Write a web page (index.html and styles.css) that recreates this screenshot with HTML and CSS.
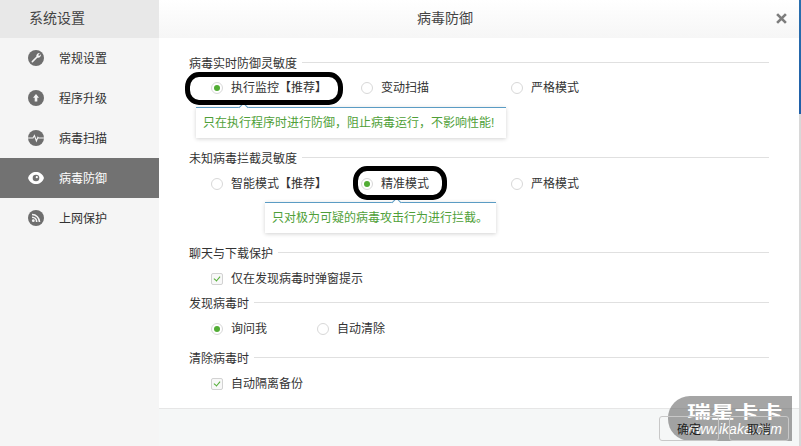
FILE: index.html
```html
<!DOCTYPE html>
<html lang="zh-CN">
<head>
    <meta charset="UTF-8">
    <title>病毒防御</title>
    <link rel="stylesheet" href="styles.css">
</head>
<body>
    <div class="window">
        <div class="sidebar">
            <div class="side-title">系统设置</div>
            <div class="side-item">
                <svg class="side-icon" viewBox="0 0 16 16"><circle cx="8" cy="8" r="8"/><path class="cut" d="M3.600 11.200 8.400 6.600a2.800 2.800 0 0 1 3.400-3.400L10.200 4.900l.9 1 1.700-1.600a2.800 2.800 0 0 1-3.500 3.400l-4.600 4.700a1 1 0 0 1-1.100-1.200z"/></svg>
                <span>常规设置</span>
            </div>
            <div class="side-item">
                <svg class="side-icon" viewBox="0 0 16 16"><circle cx="8" cy="8" r="8"/><path class="cut" d="M8 4 11 7.800H9.300V11.500H6.700V7.800H5z"/></svg>
                <span>程序升级</span>
            </div>
            <div class="side-item">
                <svg class="side-icon" viewBox="0 0 16 16"><circle cx="8" cy="8" r="8"/><path class="line" d="M0 8h5l1.400-2.500 2 5.500 1.500-3.800.7.800H16"/></svg>
                <span>病毒扫描</span>
            </div>
            <div class="side-item active">
                <svg class="side-icon" viewBox="0 0 16 16"><path class="eye" d="M0 8C1.500 3.800 4.500 2 8 2s6.500 1.800 8 6c-1.500 4.200-4.500 6-8 6S1.500 12.200 0 8z"/><circle class="pupil" cx="8" cy="8" r="3.300"/><circle class="eye" cx="8.800" cy="7.200" r="1.100"/></svg>
                <span>病毒防御</span>
            </div>
            <div class="side-item">
                <svg class="side-icon" viewBox="0 0 16 16"><circle cx="8" cy="8" r="8"/><circle class="cut" cx="5.300" cy="10.700" r="1.400"/><path class="rss" d="M4 7.300a4.700 4.700 0 0 1 4.700 4.700M4 4.500a7.500 7.500 0 0 1 7.500 7.500"/></svg>
                <span>上网保护</span>
            </div>
        </div>

        <div class="main">
            <div class="main-head">
                <span class="main-title">病毒防御</span>
                <svg class="close" viewBox="0 0 10 10"><path d="M1 1 9 9M9 1 1 9"/></svg>
            </div>

            <div class="content">
                <div class="sec-title sec-first"><span>病毒实时防御灵敏度</span></div>
                <div class="opt-row">
                    <span class="opt"><i class="radio on"></i>执行监控【推荐】</span>
                    <span class="opt"><i class="radio"></i>变动扫描</span>
                    <span class="opt"><i class="radio"></i>严格模式</span>
                </div>
                <div class="tip tip-one">只在执行程序时进行防御，阻止病毒运行，不影响性能!</div>

                <div class="sec-title sec-second"><span>未知病毒拦截灵敏度</span></div>
                <div class="opt-row">
                    <span class="opt"><i class="radio"></i>智能模式【推荐】</span>
                    <span class="opt"><i class="radio on"></i>精准模式</span>
                    <span class="opt"><i class="radio"></i>严格模式</span>
                </div>
                <div class="tip tip-two">只对极为可疑的病毒攻击行为进行拦截。</div>

                <div class="sec-title sec-third"><span>聊天与下载保护</span></div>
                <div class="opt-row">
                    <span class="opt"><i class="check"></i>仅在发现病毒时弹窗提示</span>
                </div>
                <div class="sec-title sec-fourth"><span>发现病毒时</span></div>
                <div class="opt-row">
                    <span class="opt opt-short"><i class="radio on"></i>询问我</span>
                    <span class="opt"><i class="radio"></i>自动清除</span>
                </div>
                <div class="sec-title sec-fifth"><span>清除病毒时</span></div>
                <div class="opt-row">
                    <span class="opt"><i class="check"></i>自动隔离备份</span>
                </div>
            </div>

            <div class="footer">
                <button class="btn">确定</button>
                <button class="btn">取消</button>
            </div>
        </div>
        <div class="edge"></div>

        <!-- 截图上的手绘标记 -->
        <div class="mark mark-one"></div>
        <div class="mark mark-two"></div>

        <!-- 水印 -->
        <div class="watermark">
            <div class="wm-name">瑞星卡卡</div>
            <div class="wm-url">www.ikaka.com</div>
        </div>
    </div>
</body>
</html>
```

FILE: styles.css
```css
html, body {
    margin: 0;
    padding: 0;
}
body {
    font-family: "Liberation Sans", "Noto Sans CJK SC", sans-serif;
    font-size: 12px;
    color: #333;
    background-color: white;
    overflow: hidden;
}
.window {
    position: relative;
    display: flex;
    width: 801px;
    height: 446px;
    overflow: hidden;
}

/* 左侧菜单 */
.sidebar {
    width: 159px;
    flex-shrink: 0;
    background-color: #f5f5f5;
}
.side-title {
    height: 38px;
    line-height: 36px;
    padding-left: 29px;
    font-size: 14px;
    color: #444;
    background-color: #e8e8e8;
}
.side-item {
    display: flex;
    align-items: center;
    height: 40px;
    padding-left: 28px;
    color: #333;
}
.side-item span {
    margin-left: 15px;
    margin-bottom: 2px;
}
.side-icon {
    width: 16px;
    height: 16px;
    fill: #6e6e6e;
}
.side-icon .cut {
    fill: #f5f5f5;
}
.side-icon .line {
    fill: none;
    stroke: #f5f5f5;
    stroke-width: 1.100;
}
.side-icon .rss {
    fill: none;
    stroke: #f5f5f5;
    stroke-width: 1.600;
}
.side-item.active {
    background-color: #727272;
    color: white;
}
.side-icon .eye {
    fill: white;
}
.side-icon .pupil {
    fill: #727272;
}

/* 右侧内容 */
.main {
    flex: 1;
    display: flex;
    flex-direction: column;
    background-color: white;
}
.main-head {
    position: relative;
    height: 38px;
    line-height: 36px;
    padding-right: 68px;
    text-align: center;
    font-size: 14px;
    color: #444;
    background: linear-gradient(#ffffff, #f6f6f6);
    box-sizing: border-box;
}
.close {
    position: absolute;
    top: 13px;
    right: 12px;
    width: 11px;
    height: 11px;
    fill: none;
    stroke: #7d7d7d;
    stroke-width: 2.400;
}
.content {
    flex: 1;
    padding: 0 30px;
}
.sec-title {
    display: flex;
    align-items: center;
    height: 16px;
    color: #333;
}
.sec-title::after {
    content: "";
    flex: 1;
    height: 1px;
    margin-left: 5px;
    background-color: #e0e0e0;
}
.sec-first { margin-top: 16px; }
.sec-second { margin-top: 11px; }
.sec-third { margin-top: 11px; }
.sec-fourth { margin-top: 6px; }
.sec-fifth { margin-top: 11px; }
.opt-row {
    display: flex;
    height: 18px;
    margin-top: 10px;
    padding-left: 22px;
    line-height: 18px;
    white-space: nowrap;
}
.sec-first + .opt-row {
    margin-top: 9px;
}
.opt {
    display: flex;
    align-items: center;
    width: 150px;
}
.opt-short {
    width: 106px;
}
.radio {
    position: relative;
    flex-shrink: 0;
    width: 10px;
    height: 10px;
    margin-right: 8px;
    border: 1px solid #d8d8d8;
    border-radius: 50%;
    background-color: white;
}
.radio.on::after {
    content: "";
    position: absolute;
    top: 2px;
    left: 2px;
    width: 6px;
    height: 6px;
    border-radius: 50%;
    background-color: #52ad35;
}
.check {
    position: relative;
    flex-shrink: 0;
    width: 10px;
    height: 10px;
    margin-right: 8px;
    border: 1px solid #d2d2d2;
    border-radius: 2px;
    background-color: #f8f8f8;
}
.check::after {
    content: "";
    position: absolute;
    top: 1px;
    left: 3px;
    width: 3px;
    height: 5px;
    border: solid #52ad35;
    border-width: 0 1.500px 1.500px 0;
    transform: rotate(40deg);
}

/* 提示框 */
.tip {
    position: relative;
    height: 30px;
    line-height: 30px;
    padding-left: 7px;
    color: #4f9f38;
    background-color: white;
    border-top: 1px solid #5b9cc4;
    box-shadow: 0 1px 4px rgba(0, 0, 0, 0.18);
}
.tip::before {
    content: "";
    position: absolute;
    top: -4px;
    width: 6px;
    height: 6px;
    background-color: white;
    border-left: 1px solid #5b9cc4;
    border-top: 1px solid #5b9cc4;
    transform: rotate(45deg);
}
.tip-one {
    width: 303px;
    margin-left: 7px;
    margin-top: 10px;
}
.tip-one::before { left: 44px; }
.tip-two {
    width: 224px;
    margin-left: 76px;
    margin-top: 9px;
}
.tip-two::before { left: 128px; }

/* 底部按钮 */
.footer {
    display: flex;
    justify-content: flex-end;
    gap: 10px;
    height: 38px;
    padding: 7px 10px 0 0;
    box-sizing: border-box;
    background-color: #f5f7f7;
    border-top: 1px solid #e6e6e6;
}
.btn {
    position: relative;
    z-index: 3;
    width: 60px;
    height: 25px;
    padding: 0;
    font-family: inherit;
    font-size: 12px;
    color: #222;
    background: transparent;
    border: 1px solid #c8c8c8;
    border-radius: 3px;
}
.edge {
    width: 2px;
    flex-shrink: 0;
    background: linear-gradient(#2a6fae, #1f5fa8 114px, #d8d8d8 114px);
}

/* 标记和水印 */
.mark {
    position: absolute;
    border: 5px solid black;
    border-radius: 14px / 15px;
    box-sizing: border-box;
}
.mark-one {
    left: 185px;
    top: 72px;
    width: 158px;
    height: 33px;
}
.mark-two {
    left: 353px;
    top: 166px;
    width: 94px;
    height: 34px;
}
.watermark {
    position: absolute;
    z-index: 2;
    left: 668px;
    top: 396px;
    width: 124px;
    height: 45px;
    color: white;
    background-color: rgba(105, 105, 105, 0.6);
    border-radius: 22px 0 0 22px;
}
.wm-name {
    margin: 9px 0 0 19px;
    width: 68px;
    font-size: 17px;
    line-height: 15px;
    font-weight: bold;
    white-space: nowrap;
    transform: scaleX(1.4);
    transform-origin: left center;
}
.wm-url {
    margin-top: 1px;
    padding-right: 10px;
    text-align: right;
    font-size: 14px;
    line-height: 16px;
    font-style: italic;
}
```
